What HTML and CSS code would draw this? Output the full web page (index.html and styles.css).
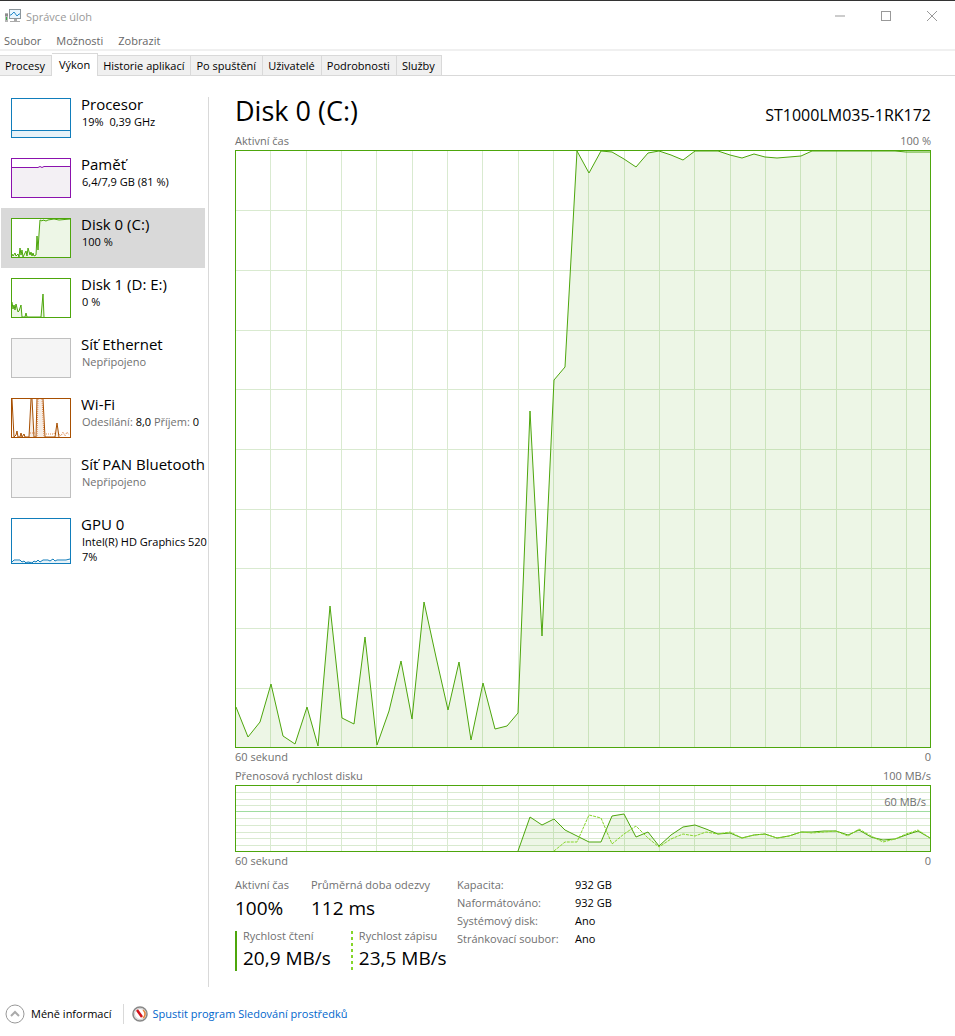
FILE: index.html
```html
<!DOCTYPE html>
<html lang="cs">
<head>
    <meta charset="utf-8">
    <title>Správce úloh</title>
    <link rel="stylesheet" href="styles.css">
</head>
<body>
    <header class="titlebar">
        <svg class="app-icon" width="18" height="16" viewBox="0 0 18 16">
            <rect x="0" y="5" width="3" height="9" fill="#b5b5b5"/>
            <path d="M0 7h3" stroke="#666"/>
            <rect x="1" y="9" width="1" height="3" fill="#3ab54a"/>
            <rect x="4.500" y="1.500" width="11" height="9" fill="#e8f5fd" stroke="#8b959b"/>
            <path d="M5 7h1l3-3 3 4 2-2h1" fill="none" stroke="#2389c9"/>
            <path d="M9 11h3v2h3v1H5v-1h4z" fill="#aaa"/>
        </svg>
        <span class="window-title">Správce úloh</span>
        <div class="window-buttons">
            <button type="button" aria-label="Minimalizovat"><svg width="12" height="12"><path d="M1 6h10"/></svg></button>
            <button type="button" aria-label="Maximalizovat"><svg width="12" height="12"><rect x="1.500" y="1.500" width="9" height="9"/></svg></button>
            <button type="button" aria-label="Zavřít"><svg width="12" height="12"><path d="M1 1l10 10M11 1L1 11"/></svg></button>
        </div>
    </header>

    <nav class="menu">
        <button type="button">Soubor</button>
        <button type="button">Možnosti</button>
        <button type="button">Zobrazit</button>
    </nav>

    <div class="tabs" role="tablist">
        <button type="button" role="tab">Procesy</button>
        <button type="button" role="tab" class="active" aria-selected="true">Výkon</button>
        <button type="button" role="tab">Historie aplikací</button>
        <button type="button" role="tab">Po spuštění</button>
        <button type="button" role="tab">Uživatelé</button>
        <button type="button" role="tab">Podrobnosti</button>
        <button type="button" role="tab">Služby</button>
    </div>

    <div class="content">
        <aside class="sidebar">
            <div class="device-list">
                <button type="button" class="device">
                    <svg class="thumb cpu" viewBox="0 0 58 38">
                        <path class="area" d="M0 32H58V38H0z"/>
                        <path class="line" d="M0 31.500H58"/>
                    </svg>
                    <span class="device-text">
                        <span class="device-name">Procesor</span>
                        <span class="device-info">19%&nbsp; 0,39 GHz</span>
                    </span>
                </button>
                <button type="button" class="device">
                    <svg class="thumb memory" viewBox="0 0 58 38">
                        <path class="area" d="M0 8H26L28 7 30 8 32 7H58V38H0z"/>
                        <path class="line" d="M0 8.500H26L28 7.500 30 8.500 32 7.500H58"/>
                    </svg>
                    <span class="device-text">
                        <span class="device-name">Paměť</span>
                        <span class="device-info">6,4/7,9 GB (81 %)</span>
                    </span>
                </button>
                <button type="button" class="device selected">
                    <svg class="thumb disk" viewBox="0 0 58 38">
                        <path class="area" d="M0 35L1 37 3 34 4 37 6 35 7 38 8 29 9 36 10 31 11 38 14 32 15 37 16 29 18 36 19 33 20 37 21 34 22 37 24 36 25 17 26 31 27 15 28 0H58V38H0z"/>
                        <path class="line" d="M0 35L1 37 3 34 4 37 6 35 7 38 8 29 9 36 10 31 11 38 14 32 15 37 16 29 18 36 19 33 20 37 21 34 22 37 24 36 25 17 26 31 27 15 28 1 30 2 31 1 34 2 36 1 42 0 47 1 58 0"/>
                    </svg>
                    <span class="device-text">
                        <span class="device-name">Disk 0 (C:)</span>
                        <span class="device-info">100 %</span>
                    </span>
                </button>
                <button type="button" class="device">
                    <svg class="thumb disk" viewBox="0 0 58 38">
                        <path class="area" d="M0 38V23L1 30 2 26 3 31 4 25 6 33 7 32 9 26 10 38H13L14 34 15 38H29L31 15 32 38z"/>
                        <path class="line" d="M0 23L1 30 2 26 3 31 4 25 6 33 7 32 9 26 10 38H13L14 34 15 38H29L31 15 32 38"/>
                    </svg>
                    <span class="device-text">
                        <span class="device-name">Disk 1 (D: E:)</span>
                        <span class="device-info">0 %</span>
                    </span>
                </button>
                <button type="button" class="device">
                    <svg class="thumb off" viewBox="0 0 58 38"></svg>
                    <span class="device-text">
                        <span class="device-name">Síť Ethernet</span>
                        <span class="device-info muted">Nepřipojeno</span>
                    </span>
                </button>
                <button type="button" class="device">
                    <svg class="thumb wifi" viewBox="0 0 58 38">
                        <path class="area" d="M17 38L19 0H20L22 38zM24 38L25 0H31L33 38zM43 38L45 24 47 38z"/>
                        <path class="line" d="M0 0L2 38 4 36 5 32 6 38H8L9 34 10 38 12 35 13 38H17L19 0M20 0L22 38H24L25 0M31 0L33 38H43L45 24 47 38"/>
                        <path class="dots" d="M18 34H23M26 0L25 38M30 0L32 38M34 35H42L44 31M47 35L49 37 51 33 53 37 55 33 57 36"/>
                    </svg>
                    <span class="device-text">
                        <span class="device-name">Wi-Fi</span>
                        <span class="device-info"><span class="muted">Odesílání:</span> 8,0 <span class="muted">Příjem:</span> 0</span>
                    </span>
                </button>
                <button type="button" class="device">
                    <svg class="thumb off" viewBox="0 0 58 38"></svg>
                    <span class="device-text">
                        <span class="device-name">Síť PAN Bluetooth</span>
                        <span class="device-info muted">Nepřipojeno</span>
                    </span>
                </button>
                <button type="button" class="device">
                    <svg class="thumb cpu tall" viewBox="0 0 58 44">
                        <path class="area" d="M0 42H58V44H0z"/>
                        <path class="line" d="M0 43L2 41H8L10 43 12 42 14 44 16 43 20 44 22 42 24 43 26 41 28 43 31 41H36L38 42 41 40 43 42 45 41H54L58 40"/>
                    </svg>
                    <span class="device-text">
                        <span class="device-name">GPU 0</span>
                        <span class="device-info">Intel(R) HD Graphics 520</span>
                        <span class="device-info">7%</span>
                    </span>
                </button>
            </div>
        </aside>

        <main class="detail">
            <div class="detail-header">
                <h1>Disk 0 (C:)</h1>
                <span class="model">ST1000LM035-1RK172</span>
            </div>

            <div class="chart-label"><span>Aktivní čas</span><span>100 %</span></div>
            <div class="chart chart-active">
                <svg viewBox="0 0 694 596" preserveAspectRatio="none">
                    <g transform="translate(-1 -1)">
                        <path class="grid" d="M35 0V597M71 0V597M106 0V597M141 0V597M177 0V597M212 0V597M247 0V597M283 0V597M318 0V597M353 0V597M389 0V597M424 0V597M459 0V597M495 0V597M530 0V597M565 0V597M601 0V597M636 0V597M671 0V597"/>
                        <path class="grid" d="M0 60H695M0 120H695M0 180H695M0 239H695M0 299H695M0 359H695M0 418H695M0 478H695M0 538H695"/>
                    </g>
                    <polygon class="area" points="0,556 12,586 24,571 35,533 47,585 59,593 71,556 82,595 94,455 106,567 118,573 129,486 141,594 153,560 165,510 176,568 188,451 200,506 212,559 223,511 235,589 247,532 259,578 271,575 282,562 294,260 306,485 318,229 329,216 341,0 353,22 365,0 376,1 388,8 400,16 412,2 423,0 435,4 447,9 459,0 482,0 494,4 506,7 518,3 529,6 541,7 553,6 565,5 576,0 659,0 670,1 694,1 694,596 0,596"/>
                    <polyline class="line" points="0,556 12,586 24,571 35,533 47,585 59,593 71,556 82,595 94,455 106,567 118,573 129,486 141,594 153,560 165,510 176,568 188,451 200,506 212,559 223,511 235,589 247,532 259,578 271,575 282,562 294,260 306,485 318,229 329,216 341,0 353,22 365,0 376,1 388,8 400,16 412,2 423,0 435,4 447,9 459,0 482,0 494,4 506,7 518,3 529,6 541,7 553,6 565,5 576,0 659,0 670,1 694,1"/>
                </svg>
            </div>
            <div class="chart-label time"><span>60 sekund</span><span>0</span></div>

            <div class="chart-label"><span>Přenosová rychlost disku</span><span>100 MB/s</span></div>
            <div class="chart chart-transfer">
                <svg viewBox="0 0 694 65" preserveAspectRatio="none">
                    <g transform="translate(-1 -1)">
                        <path class="grid" d="M35 0V66M71 0V66M106 0V66M141 0V66M177 0V66M212 0V66M247 0V66M283 0V66M318 0V66M353 0V66M389 0V66M424 0V66M459 0V66M495 0V66M530 0V66M565 0V66M601 0V66M636 0V66M671 0V66"/>
                        <path class="grid" d="M0 7H695M0 14H695M0 20H695M0 33H695M0 40H695M0 47H695M0 53H695M0 60H695"/>
                        <path class="limit" d="M0 26H695"/>
                    </g>
                    <polygon class="area" points="282,65 294,31 306,39 318,33 329,44 341,50 353,56 365,56 376,30 388,28 400,51 412,46 423,60 435,49 447,41 459,39 470,43 482,48 494,47 506,52 518,49 529,48 541,52 553,50 565,46 576,46 588,45 600,45 612,49 623,44 635,51 647,54 659,53 670,49 682,45 694,52 694,65"/>
                    <polyline class="line" points="282,65 294,31 306,39 318,33 329,44 341,50 353,56 365,56 376,30 388,28 400,51 412,46 423,60 435,49 447,41 459,39 470,43 482,48 494,47 506,52 518,49 529,48 541,52 553,50 565,46 576,46 588,45 600,45 612,49 623,44 635,51 647,54 659,53 670,49 682,45 694,52"/>
                    <polyline class="line write" points="318,65 329,56 341,56 353,29 365,32 376,58 388,48 400,40 412,52 423,61 435,53 447,48 459,50 470,46 482,48 494,46 506,52 518,49 529,48 541,52 553,50 565,46 576,47 588,46 600,45 612,50 623,43 635,50 647,56 659,53 670,48 682,44 694,52"/>
                </svg>
                <span class="limit-label">60 MB/s</span>
            </div>
            <div class="chart-label"><span>60 sekund</span><span>0</span></div>

            <div class="stats">
                <div class="live">
                    <div class="live-row">
                        <div class="stat">
                            <div class="stat-label">Aktivní čas</div>
                            <div class="stat-value">100%</div>
                        </div>
                        <div class="stat">
                            <div class="stat-label">Průměrná doba odezvy</div>
                            <div class="stat-value">112 ms</div>
                        </div>
                    </div>
                    <div class="live-row rates">
                        <div class="stat read">
                            <div class="stat-label">Rychlost čtení</div>
                            <div class="stat-value">20,9 MB/s</div>
                        </div>
                        <div class="stat written">
                            <div class="stat-label">Rychlost zápisu</div>
                            <div class="stat-value">23,5 MB/s</div>
                        </div>
                    </div>
                </div>
                <table class="properties">
                    <tr><th scope="row">Kapacita:</th><td>932 GB</td></tr>
                    <tr><th scope="row">Naformátováno:</th><td>932 GB</td></tr>
                    <tr><th scope="row">Systémový disk:</th><td>Ano</td></tr>
                    <tr><th scope="row">Stránkovací soubor:</th><td>Ano</td></tr>
                </table>
            </div>
        </main>
    </div>

    <footer class="footer">
        <button type="button" class="less">
            <svg width="20" height="20" viewBox="0 0 20 20">
                <circle cx="10" cy="10" r="9" fill="#fff" stroke="#999"/>
                <path d="M6 12l4-4 4 4" fill="none" stroke="#aaa" stroke-width="2"/>
            </svg>
            Méně informací
        </button>
        <a href="#" class="monitor">
            <svg width="16" height="16" viewBox="0 0 16 16">
                <circle cx="8" cy="8" r="7" fill="#f4f4f0" stroke="#888" stroke-width="1.500"/>
                <circle cx="8" cy="8" r="5.500" fill="#fff" stroke="#ccc"/>
                <path d="M11 4a5 5 0 0 1 0 8" fill="none" stroke="#e8843a" stroke-width="1.500"/>
                <path d="M5 4l5 7" stroke="#d3131b" stroke-width="2.500"/>
            </svg>
            <span>Spustit program Sledování prostředků</span>
        </a>
    </footer>
</body>
</html>
```
FILE: styles.css
```css
* {
    box-sizing: border-box;
}

body {
    margin: 0;
    min-height: 100vh;
    display: flex;
    flex-direction: column;
    border-top: 1px solid #333;
    background-color: #fff;
    color: #000;
    font-family: "Open Sans", "Noto Sans", sans-serif;
    font-size: 11px;
}

button {
    font: inherit;
    color: inherit;
    background: none;
    border: none;
    padding: 0;
    margin: 0;
}

svg {
    display: block;
    flex-shrink: 0;
}

.titlebar {
    display: flex;
    align-items: center;
    height: 30px;
    padding-left: 5px;
    color: #999;
}

.window-title {
    flex: 1;
    margin-left: 3px;
}

.window-buttons {
    display: flex;
}

.window-buttons button {
    width: 46px;
    height: 30px;
    display: flex;
    align-items: center;
    justify-content: center;
}

.window-buttons path,
.window-buttons rect {
    fill: none;
    stroke: #999;
}

.menu {
    display: flex;
    gap: 15px;
    height: 20px;
    padding-left: 4px;
    color: #666;
    border-bottom: 2px solid #f0f0f0;
}

.tabs {
    display: flex;
    align-items: flex-end;
    height: 25px;
    border-bottom: 1px solid #d9d9d9;
}

.tabs button {
    height: 20px;
    padding: 0 6px 0 5px;
    background-color: #f0f0f0;
    border: 1px solid #d9d9d9;
    border-left: none;
    border-bottom: none;
}

.tabs button.active {
    height: 23px;
    margin-bottom: -1px;
    padding: 0 7px 2px;
    background-color: #fff;
}

.content {
    flex: 1;
    display: flex;
}

.sidebar {
    width: 209px;
    flex-shrink: 0;
    margin: 21px 0 3px;
    border-right: 1px solid #d9d9d9;
}

.device-list {
    margin-top: -9px;
}

.device {
    display: flex;
    align-items: flex-start;
    width: 204px;
    height: 60px;
    margin-left: 1px;
    padding-left: 10px;
    text-align: left;
    white-space: nowrap;
}

.device.selected {
    background-color: #d9d9d9;
}

.thumb {
    width: 60px;
    height: 40px;
    margin-top: 10px;
    border: 1px solid;
    background-color: #fff;
}

.thumb.tall {
    height: 46px;
}

.thumb path {
    stroke: currentColor;
    fill: none;
}

.thumb .area {
    stroke: none;
    fill: currentColor;
    opacity: 0.1;
}

.thumb .dots {
    stroke: #e08a50;
    stroke-dasharray: 1 1;
}

.cpu {
    color: #117dbb;
}

.memory {
    color: #8b12ae;
}

.memory .area {
    fill: #4f2b5e;
    opacity: 0.07;
}

.disk {
    color: #4da60c;
}

.wifi {
    color: #a74f01;
}

.off {
    border-color: #bfbfbf;
    background-color: #f5f5f5;
}

.device-text {
    width: 127px;
    flex-shrink: 0;
    overflow: hidden;
    margin-left: 10px;
    padding-top: 7px;
}

.device-name {
    display: block;
    font-size: 15px;
    line-height: 19px;
}

.device-info {
    display: block;
    line-height: 15px;
    padding-left: 1px;
}

.muted {
    color: #707070;
}

.detail {
    flex: 1;
    min-width: 0;
    display: flex;
    flex-direction: column;
    padding: 16px 24px 19px 26px;
}

.detail-header {
    display: flex;
    justify-content: space-between;
    align-items: baseline;
    height: 40px;
}

h1 {
    margin: 0;
    font-size: 27px;
    font-weight: normal;
    line-height: 38px;
}

.model {
    font-size: 16px;
}

.chart-label {
    display: flex;
    justify-content: space-between;
    line-height: 18px;
    color: #707070;
}

.chart-label.time {
    margin-bottom: 1px;
}

.chart {
    position: relative;
    border: 1px solid #4da60c;
}

.chart svg {
    position: absolute;
    width: 100%;
    height: 100%;
}

.chart path,
.chart polyline {
    fill: none;
    vector-effect: non-scaling-stroke;
}

.chart .grid {
    stroke: #d9ead0;
    shape-rendering: crispEdges;
}

.chart .limit {
    stroke: #a0dca0;
    shape-rendering: crispEdges;
}

.chart .area {
    fill: #4da60c;
    opacity: 0.1;
}

.chart .line {
    stroke: #4da60c;
}

.chart .write {
    stroke: #86d52a;
    stroke-dasharray: 3 1;
}

.chart-active {
    flex: 1;
    min-height: 200px;
}

.chart-transfer {
    height: 67px;
}

.limit-label {
    position: absolute;
    top: 7px;
    right: 4px;
    line-height: 18px;
    color: #707070;
}

.stats {
    display: flex;
    margin-top: 6px;
}

.live {
    width: 222px;
}

.live-row {
    display: flex;
    gap: 22px;
}

.stat-label {
    line-height: 18px;
    color: #707070;
    white-space: nowrap;
}

.stat-value {
    font-size: 19px;
    line-height: 28px;
    white-space: nowrap;
}

.rates {
    gap: 20px;
    margin-top: 9px;
}

.rates .stat {
    height: 40px;
    padding-left: 8px;
    background: linear-gradient(#4da60c, #4da60c) no-repeat left / 2px 100%;
}

.rates .stat-label {
    line-height: 10px;
}

.rates .stat-value {
    line-height: 34px;
}

.rates .written {
    background-image: repeating-linear-gradient(#86d52a 0 3px, #fff 3px 6px);
}

.properties {
    border-collapse: collapse;
    line-height: 18px;
    align-self: flex-start;
}

.properties th,
.properties td {
    padding: 0;
    text-align: left;
    font-weight: normal;
}

.properties th {
    width: 118px;
    color: #707070;
}

.footer {
    display: flex;
    align-items: center;
    height: 46px;
    padding: 1px 5px 0;
}

.less {
    display: flex;
    align-items: center;
    gap: 6px;
    padding-right: 11px;
    border-right: 1px solid #d9d9d9;
    line-height: 16px;
}

.monitor {
    display: flex;
    align-items: center;
    gap: 5px;
    margin-left: 8px;
    color: #0066cc;
    text-decoration: none;
}
```
